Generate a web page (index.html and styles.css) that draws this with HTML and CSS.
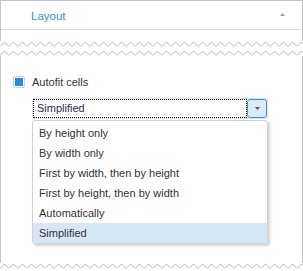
FILE: index.html
```html
<!DOCTYPE html>
<html lang="en">
<head>
    <meta charset="UTF-8">
    <title>Layout</title>
    <link rel="stylesheet" href="styles.css">
</head>
<body>

    <div class="sheet">
        <div class="piece piece-top">
            <div class="header">
                <span class="title">Layout</span>
                <svg class="collapse" width="5" height="3" viewBox="0 0 5 3"><path d="M0 3 L2.5 0 L5 3 Z" fill="#a3a3a3"/></svg>
            </div>
            <div class="spacer"></div>
        </div>
        <svg class="tear" width="303" height="6">
            <defs>
                <pattern id="zz1" width="9" height="6" patternUnits="userSpaceOnUse">
                    <path d="M0 5.5 L4.5 1 L9 5.5" fill="none" stroke="#b4b4b4" stroke-width="1"/>
                </pattern>
            </defs>
            <rect width="303" height="6" fill="url(#zz1)"/>
        </svg>
        <div class="gap"></div>
        <svg class="tear" width="303" height="6">
            <defs>
                <pattern id="zz2" width="9" height="6" patternUnits="userSpaceOnUse">
                    <path d="M0 5.5 L4.5 1 L9 5.5" fill="none" stroke="#b4b4b4" stroke-width="1"/>
                </pattern>
            </defs>
            <rect width="303" height="6" fill="url(#zz2)"/>
        </svg>

        <div class="piece piece-body">
            <label class="check-row">
                <span class="checkbox"><span class="checkbox-mark"></span></span>
                <span class="check-label">Autofit cells</span>
            </label>

            <div class="combo">
                <div class="combo-field">Simplified</div>
                <div class="combo-button">
                    <svg width="5" height="3" viewBox="0 0 5 3"><path d="M0 0 L5 0 L2.5 3 Z" fill="#555"/></svg>
                </div>
            </div>

            <ul class="dropdown">
                <li>By height only</li>
                <li>By width only</li>
                <li>First by width, then by height</li>
                <li>First by height, then by width</li>
                <li>Automatically</li>
                <li class="selected">Simplified</li>
            </ul>
        </div>

        <svg class="tear" width="303" height="6">
            <defs>
                <pattern id="zz3" width="9" height="6" patternUnits="userSpaceOnUse">
                    <path d="M0 5.5 L4.5 1 L9 5.5" fill="none" stroke="#b4b4b4" stroke-width="1"/>
                </pattern>
            </defs>
            <rect width="303" height="6" fill="url(#zz3)"/>
        </svg>
    </div>

</body>
</html>
```

FILE: styles.css
```css
/* Base */
body {
    margin: 0;
    background: white;
    font-family: "Liberation Sans", Arial, sans-serif;
    font-size: 11px;
    color: #333;
}

.sheet {
    width: 303px;
}

/* Torn pieces */
.piece {
    border-left: 1px solid #c4c4c4;
    border-right: 1px solid #c4c4c4;
    background: white;
}

.piece-top {
    border-top: 1px solid #c4c4c4;
}

.tear {
    display: block;
}

.gap {
    height: 3px;
}

/* Header */
.header {
    display: flex;
    align-items: center;
    justify-content: space-between;
    height: 28px;
    padding: 0 16px 0 30px;
    border-bottom: 1px solid #dcdcdc;
    margin-right: 1px;
}

.title {
    color: #3590db;
    font-size: 11.5px;
    padding-top: 2px;
}

.collapse {
    display: block;
    margin-top: -1px;
}

.spacer {
    height: 11px;
}

/* Body */
.piece-body {
    padding: 20px 0 19px 12px;
}

.check-row {
    display: flex;
    align-items: center;
    gap: 7px;
    height: 12px;
}

.checkbox {
    box-sizing: border-box;
    width: 12px;
    height: 12px;
    border: 1px solid #cfcfcf;
    border-radius: 2px;
    padding: 1px;
}

.checkbox-mark {
    display: block;
    width: 8px;
    height: 8px;
    background: #2b8ad5;
}

.check-label {
    color: #333;
}

/* Combo box */
.combo {
    box-sizing: border-box;
    display: flex;
    width: 236px;
    height: 21px;
    margin: 10px 0 0 19px;
    border: 1px solid #dedede;
    border-radius: 2px;
}

.combo-field {
    flex: 1;
    border: 1px dotted #000;
    padding-left: 3px;
    line-height: 16px;
    color: #2c2c50;
}

.combo-button {
    box-sizing: border-box;
    display: flex;
    align-items: center;
    justify-content: center;
    width: 20px;
    border: 1px solid #3c93d8;
    border-radius: 3px;
    background: #dbeaf8;
}

/* Dropdown */
.dropdown {
    box-sizing: border-box;
    width: 236px;
    margin: 1px 0 0 19px;
    padding: 2px 0 0;
    list-style: none;
    border: 1px solid #d2d2d2;
    border-radius: 3px;
    background: white;
    box-shadow: 2px 2px 3px rgba(0, 0, 0, 0.18);
}

.dropdown li {
    height: 20px;
    line-height: 20px;
    padding-left: 6px;
    color: #333;
}

.dropdown li.selected {
    background: #d6e7f6;
}
```
